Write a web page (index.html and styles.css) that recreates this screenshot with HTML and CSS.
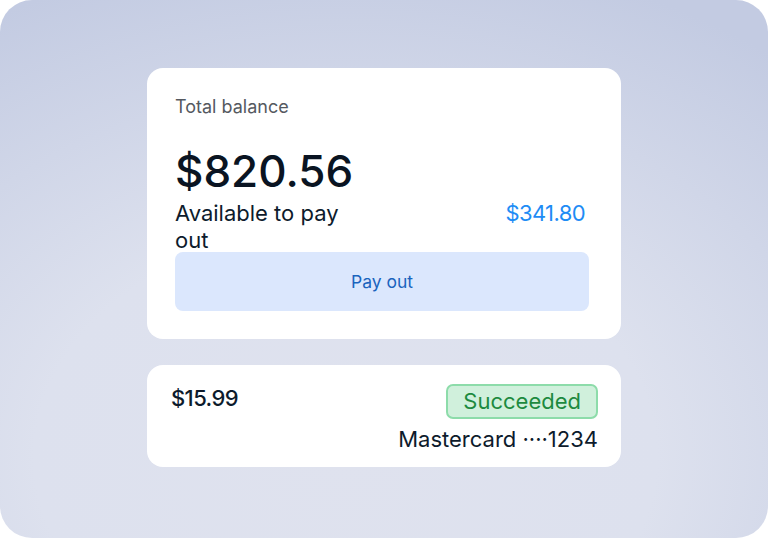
FILE: index.html
```html
<!DOCTYPE html>
<html>
<head>
<meta charset="utf-8">
<link rel="stylesheet" href="styles.css">
</head>
<body>
<div class="stage">
  <div class="stack">
    <section class="card balance">
      <div class="label">Total balance</div>
      <div class="total">$820.56</div>
      <div class="avail-row">
        <div class="avail-label">Available to pay out</div>
        <div class="avail-amount">$341.80</div>
      </div>
      <button class="payout">Pay out</button>
    </section>
    <section class="card payment">
      <div class="pay-amount">$15.99</div>
      <div class="pay-right">
        <span class="badge">Succeeded</span>
        <span class="card-info">Mastercard ····1234</span>
      </div>
    </section>
  </div>
</div>
</body>
</html>
```
FILE: styles.css
```css
html, body {
  margin: 0;
  padding: 0;
  background: #ffffff;
}
body {
  font-family: "Inter", "Noto Sans", sans-serif;
  color: #0d1b2c;
}
.stage {
  width: 768px;
  height: 538px;
  border-radius: 32px;
  background: radial-gradient(ellipse 90% 95% at 45% 85%, #dfe2ee 0%, #dde1ee 45%, #c3cbe2 100%);
  display: flex;
  justify-content: center;
  box-sizing: border-box;
  padding-top: 68px;
}
.stack {
  width: 474px;
  display: flex;
  flex-direction: column;
  gap: 26px;
}
.card {
  background: #ffffff;
  border-radius: 16px;
}
.balance {
  height: 271px;
  box-sizing: border-box;
  padding: 27px 32px 0 28px;
  display: flex;
  flex-direction: column;
}
.label {
  font-size: 18px;
  line-height: 24px;
  color: #55595f;
}
.total {
  font-size: 44px;
  line-height: 50px;
  font-weight: 500;
  margin-top: 27px;
  color: #0a1422;
}
.avail-row {
  margin-top: 4px;
  display: flex;
  justify-content: space-between;
  align-items: flex-start;
  font-size: 22px;
  line-height: 27px;
}
.avail-label {
  width: 190px;
  color: #0d1b2c;
}
.avail-amount {
  color: #1e8cf5;
  letter-spacing: -0.6px;
  padding-right: 4px;
}
.payout {
  margin-top: -2px;
  height: 59px;
  border: none;
  border-radius: 8px;
  background: #dbe7fd;
  color: #1a64bd;
  font-family: inherit;
  font-size: 17.5px;
  width: 100%;
}
.payment {
  height: 102px;
  box-sizing: border-box;
  padding: 19px 23px 0 24px;
  display: flex;
  justify-content: space-between;
  align-items: flex-start;
}
.pay-amount {
  font-size: 22px;
  font-weight: 500;
  letter-spacing: -0.6px;
  line-height: 28px;
  color: #0d1b2c;
}
.pay-right {
  display: flex;
  flex-direction: column;
  align-items: flex-end;
  gap: 7px;
}
.badge {
  height: 35px;
  box-sizing: border-box;
  padding: 0 15px;
  border: 2px solid #8ddcaa;
  border-radius: 7px;
  background: #d0f0dc;
  color: #1d8a3f;
  font-size: 22px;
  line-height: 31px;
}
.card-info {
  font-size: 22px;
  line-height: 26px;
  color: #0d1b2c;
}
```
